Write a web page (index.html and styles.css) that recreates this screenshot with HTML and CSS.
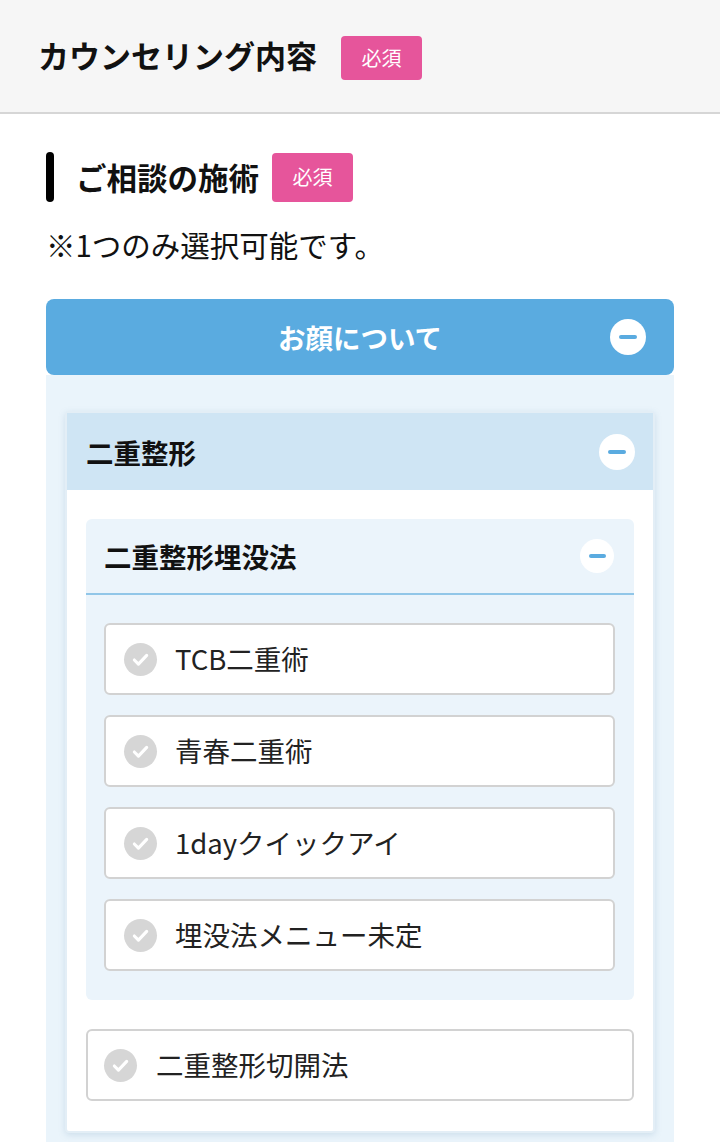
FILE: index.html
```html
<!DOCTYPE html>
<html lang="ja">
<head>
<meta charset="utf-8">
<link rel="stylesheet" href="styles.css">
</head>
<body>
<header class="page-header">
  <h1 class="page-title">カウンセリング内容</h1>
  <span class="badge badge-lg">必須</span>
</header>
<main class="main">
  <div class="section-title">
    <span class="bar"></span>
    <h2 class="section-text">ご相談の施術</h2>
    <span class="badge badge-md">必須</span>
  </div>
  <p class="note">※1つのみ選択可能です。</p>

  <div class="accordion">
    <div class="acc-head">
      <span class="acc-head-text">お顔について</span>
      <span class="minus minus-top"><span></span></span>
    </div>
    <div class="acc-panel">
      <div class="card">
        <div class="card-head">
          <span class="card-title">二重整形</span>
          <span class="minus"><span></span></span>
        </div>
        <div class="card-body">
          <div class="sub">
            <div class="sub-head">
              <span class="sub-title">二重整形埋没法</span>
              <span class="minus minus-sm"><span></span></span>
            </div>
            <div class="sub-body">
              <label class="option"><span class="check"><svg viewBox="0 0 32 32"><path d="M10 16.5l4 4 8-8.5" /></svg></span><span class="opt-text">TCB二重術</span></label>
              <label class="option"><span class="check"><svg viewBox="0 0 32 32"><path d="M10 16.5l4 4 8-8.5" /></svg></span><span class="opt-text">青春二重術</span></label>
              <label class="option"><span class="check"><svg viewBox="0 0 32 32"><path d="M10 16.5l4 4 8-8.5" /></svg></span><span class="opt-text">1dayクイックアイ</span></label>
              <label class="option"><span class="check"><svg viewBox="0 0 32 32"><path d="M10 16.5l4 4 8-8.5" /></svg></span><span class="opt-text">埋没法メニュー未定</span></label>
            </div>
          </div>
          <label class="option option-wide"><span class="check"><svg viewBox="0 0 32 32"><path d="M10 16.5l4 4 8-8.5" /></svg></span><span class="opt-text">二重整形切開法</span></label>
        </div>
      </div>
    </div>
  </div>
</main>
</body>
</html>
```

FILE: styles.css
```css
* { box-sizing: border-box; }
html, body { margin: 0; padding: 0; background: #fff; }
body {
  font-family: "Noto Sans CJK JP", "Noto Sans", sans-serif;
  color: #111;
  width: 720px;
  height: 1142px;
  overflow: hidden;
}
.page-header {
  height: 114px;
  background: #f6f6f6;
  border-bottom: 2px solid #d6d6d6;
  display: flex;
  align-items: center;
  padding-left: 38px;
  gap: 24px;
}
.page-title {
  margin: 0 0 4px;
  font-size: 31px;
  font-weight: 700;
  line-height: 1;
  color: #111;
}
.badge {
  background: #e6559b;
  color: #fff;
  border-radius: 4px;
  display: inline-flex;
  align-items: center;
  justify-content: center;
  font-size: 20px;
  font-weight: 400;
  line-height: 1;
}
.badge-lg { width: 81px; height: 44px; margin-top: 4px; }
.badge-md { width: 81px; height: 49px; margin-left: 13px; }
.main { padding: 0 46px; }
.section-title {
  margin-top: 38px;
  display: flex;
  align-items: center;
  height: 50px;
}
.bar {
  width: 8px;
  height: 50px;
  border-radius: 4px;
  background: #000;
  margin-right: 22px;
}
.section-text {
  margin: 0;
  font-size: 30.5px;
  font-weight: 700;
  line-height: 1;
}
.note {
  margin: 22px 0 0;
  font-size: 29.5px;
  line-height: 40px;
  color: #111;
}
.accordion { margin-top: 35px; }
.acc-head {
  height: 76px;
  background: #5aabe0;
  border-radius: 8px;
  position: relative;
  display: flex;
  align-items: center;
  justify-content: center;
}
.acc-head-text {
  color: #fff;
  font-size: 27.5px;
  font-weight: 700;
}
.minus {
  width: 36px;
  height: 36px;
  border-radius: 50%;
  background: #fff;
  display: flex;
  align-items: center;
  justify-content: center;
  flex: none;
}
.minus span {
  width: 18px;
  height: 4px;
  border-radius: 2px;
  background: #5aabe0;
}
.minus-sm { width: 34px; height: 34px; }
.minus-sm span { width: 17px; }
.minus-top {
  position: absolute;
  right: 28px;
  top: 20px;
}
.acc-panel {
  background: #eaf4fb;
  padding: 36px 19px 10px;
}
.card {
  background: #fff;
  border: 2px solid #e3eef6;
  border-radius: 4px;
  box-shadow: 0 2px 6px rgba(120, 160, 190, 0.25);
}
.card-head {
  height: 77px;
  background: #cfe5f4;
  display: flex;
  align-items: center;
  justify-content: space-between;
  padding: 0 18px 0 19px;
}
.card-title, .sub-title {
  font-size: 27.5px;
  font-weight: 700;
  color: #111;
}
.card-body {
  padding: 29px 19px 30px;
  display: flex;
  flex-direction: column;
  gap: 29px;
}
.sub {
  background: #ebf4fb;
  border-radius: 6px;
}
.sub-head {
  height: 76px;
  border-bottom: 2px solid #91c6e8;
  display: flex;
  align-items: center;
  justify-content: space-between;
  padding: 0 20px 0 18px;
}
.sub-body {
  padding: 28px 19px 29px 18px;
  display: flex;
  flex-direction: column;
  gap: 20px;
}
.option {
  height: 72px;
  background: #fff;
  border: 2px solid #d2d2d2;
  border-radius: 6px;
  display: flex;
  align-items: center;
  padding-left: 18px;
  gap: 18px;
}
.option-wide { padding-left: 16px; gap: 19px; }
.check {
  width: 33px;
  height: 33px;
  border-radius: 50%;
  background: #d6d6d6;
  display: flex;
  flex: none;
}
.check svg { width: 33px; height: 33px; }
.check path {
  fill: none;
  stroke: #fff;
  stroke-width: 3;
  stroke-linecap: round;
  stroke-linejoin: round;
}
.opt-text {
  font-size: 27.5px;
  color: #222;
  line-height: 1;
}
```
